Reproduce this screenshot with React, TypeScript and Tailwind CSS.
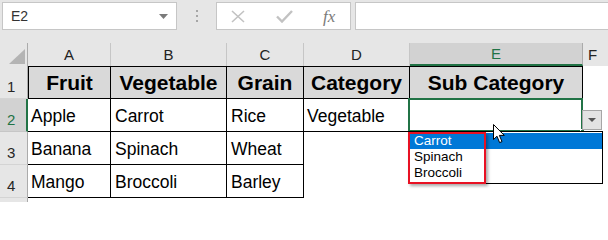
import React from "react";

const cols = [
  { key: "A", w: "w-[83px]" },
  { key: "B", w: "w-[116px]" },
  { key: "C", w: "w-[77px]" },
  { key: "D", w: "w-[106px]" },
  { key: "E", w: "w-[173px]" },
];

const data = [
  ["Apple", "Carrot", "Rice"],
  ["Banana", "Spinach", "Wheat"],
  ["Mango", "Broccoli", "Barley"],
];

const RowHead = ({ n, active }: { n: number; active?: boolean }) => (
  <div
    className={
      "w-[28px] h-[33px] shrink-0 flex items-end pl-[7px] pb-[4px] text-[15px] leading-none border-b " +
      (active
        ? "bg-[#d2d2d2] text-[#217346] border-b-[#c6c6c6] border-r-2 border-r-[#217346]"
        : "bg-[#e6e6e6] text-[#262626] border-b-[#d4d4d4] border-r border-r-[#ababab]")
    }
  >
    {n}
  </div>
);

const Cursor = () => (
  <svg width="13" height="20" viewBox="0 0 13 20">
    <path
      d="M0.5 0.5 L0.5 15.5 L4 12.2 L6.6 18.6 L9 17.6 L6.4 11.4 L11.3 11.4 Z"
      fill="#fff"
      stroke="#000"
      strokeWidth="1"
      strokeLinejoin="miter"
    />
  </svg>
);

export default function App() {
  return (
    <div className="relative w-[608px] h-[202px] overflow-hidden bg-white font-['Liberation_Sans',Arial,sans-serif] text-black">
      {/* formula bar */}
      <div className="h-[43px] bg-[#e6e6e6] flex items-start pt-[2px] pl-[2px]">
        <div className="w-[175px] h-[28px] bg-white border border-[#c6c6c6] flex items-center justify-between pl-[8px] pr-[8px]">
          <span className="text-[14px] text-[#333]">E2</span>
          <svg width="9" height="5" viewBox="0 0 9 5">
            <path d="M0 0 H9 L4.5 5 Z" fill="#7a7a7a" />
          </svg>
        </div>
        <div className="w-[39px] h-[28px] flex flex-col items-center justify-center gap-[3px] pl-[1px]">
          <div className="w-[2px] h-[2px] bg-[#a6a6a6]" />
          <div className="w-[2px] h-[2px] bg-[#a6a6a6]" />
          <div className="w-[2px] h-[2px] bg-[#a6a6a6]" />
        </div>
        <div className="w-[135px] h-[28px] bg-white border border-[#c6c6c6] flex items-center">
          <svg width="14" height="13" viewBox="0 0 14 13" className="ml-[14px]">
            <path d="M1 1 L13 12 M13 1 L1 12" stroke="#c2c2c2" strokeWidth="1.6" />
          </svg>
          <svg width="17" height="13" viewBox="0 0 17 13" className="ml-[31px]">
            <path d="M1 6.5 L6 11.5 L16 1" stroke="#c2c2c2" strokeWidth="2.4" fill="none" />
          </svg>
          <span className="ml-[30px] text-[17px] italic text-[#7a7a7a] font-['Liberation_Serif',serif] leading-none">
            fx
          </span>
        </div>
        <div className="ml-[4px] flex-1 h-[28px] bg-white border border-[#c6c6c6] border-r-0" />
      </div>

      {/* column headers */}
      <div className="flex h-[23px] bg-[#e6e6e6]">
        <div className="w-[28px] h-full shrink-0 border-r border-[#ababab] flex items-end justify-end pr-[2px] pb-[2px]">
          <svg width="16" height="15" viewBox="0 0 16 15">
            <path d="M16 0 V15 H0 Z" fill="#b4b4b4" />
          </svg>
        </div>
        {cols.map((c) =>
          c.key === "E" ? (
            <div
              key={c.key}
              className={`${c.w} h-full shrink-0 bg-[#d2d2d2] border-b-2 border-[#217346] border-r border-r-[#ababab] flex items-end justify-center pb-[3px] text-[15px] leading-none text-[#217346]`}
            >
              {c.key}
            </div>
          ) : (
            <div
              key={c.key}
              className={`${c.w} h-full shrink-0 border-r border-[#c6c6c6] flex items-end justify-center pb-[4px] text-[15px] leading-none text-[#222]`}
            >
              {c.key}
            </div>
          )
        )}
        <div className="flex-1 h-full flex items-end pl-[5px] pb-[4px] text-[15px] leading-none text-[#222]">F</div>
      </div>

      {/* row 1 */}
      <div className="flex">
        <RowHead n={1} />
        {["Fruit", "Vegetable", "Grain", "Category", "Sub Category"].map((t, i) => (
          <div
            key={t}
            className={`${cols[i].w} h-[33px] shrink-0 bg-[#d9d9d9] border-t border-b border-r border-black flex items-center justify-center text-[21px] font-bold leading-none ${i === 0 ? "border-l" : ""}`}
          >
            {t}
          </div>
        ))}
      </div>

      {/* rows 2-4 */}
      {data.map((row, r) => (
        <div key={r} className="flex">
          <RowHead n={r + 2} active={r === 0} />
          {row.map((t, i) => (
            <div
              key={t}
              className={`${cols[i].w} h-[33px] shrink-0 border-b border-r border-black flex items-center pt-[3px] text-[17.5px] leading-none ${i === 0 ? "pl-[3px]" : "pl-[4px]"}`}
            >
              {t}
            </div>
          ))}
          {r === 0 ? (
            <>
              <div className="w-[106px] h-[33px] shrink-0 border-b border-r border-black flex items-center pt-[3px] pl-[3px] text-[17.5px] leading-none">
                Vegetable
              </div>
              <div className="relative w-[173px] h-[33px] shrink-0 border-b border-r border-black">
                {/* selection */}
                <div className="absolute -left-[2px] -top-[1px] -right-[1px] -bottom-[1px] border-2 border-[#217346]" />
                <div className="absolute -right-[3px] -bottom-[3px] w-[5px] h-[5px] bg-[#217346] border border-white" />
                {/* dropdown arrow */}
                <div className="absolute left-[172px] top-[11px] w-[20px] h-[20px] bg-[#e3e3e3] border border-[#a6a6a6] flex items-center justify-center">
                  <svg width="8" height="4" viewBox="0 0 8 4">
                    <path d="M0 0 H8 L4 4 Z" fill="#555" />
                  </svg>
                </div>
                {/* list */}
                <div className="absolute left-[-2px] top-[32px] w-[195px] h-[53px] bg-white border border-black pt-[1px] text-[13.5px] leading-[16px]">
                  <div className="h-[16px] bg-[#0078d7] text-white pl-[5px]">Carrot</div>
                  <div className="h-[16px] pl-[5px]">Spinach</div>
                  <div className="h-[16px] pl-[5px]">Broccoli</div>
                </div>
                <div className="absolute left-[-2px] top-[33px] w-[78px] h-[52px] border-[2.5px] border-[#e81123] shadow-[2px_2px_3px_rgba(0,0,0,0.35)]" />
                {/* mouse pointer */}
                <div className="absolute left-[83px] top-[25px]">
                  <Cursor />
                </div>
              </div>
            </>
          ) : (
            <>
              <div className="w-[106px] h-[33px] shrink-0" />
              <div className="w-[173px] h-[33px] shrink-0" />
            </>
          )}
        </div>
      ))}

      {/* row 5 partial */}
      <div className="flex">
        <div className="w-[28px] h-[10px] shrink-0 bg-[#e6e6e6] border-r border-[#ababab]" />
      </div>
    </div>
  );
}
